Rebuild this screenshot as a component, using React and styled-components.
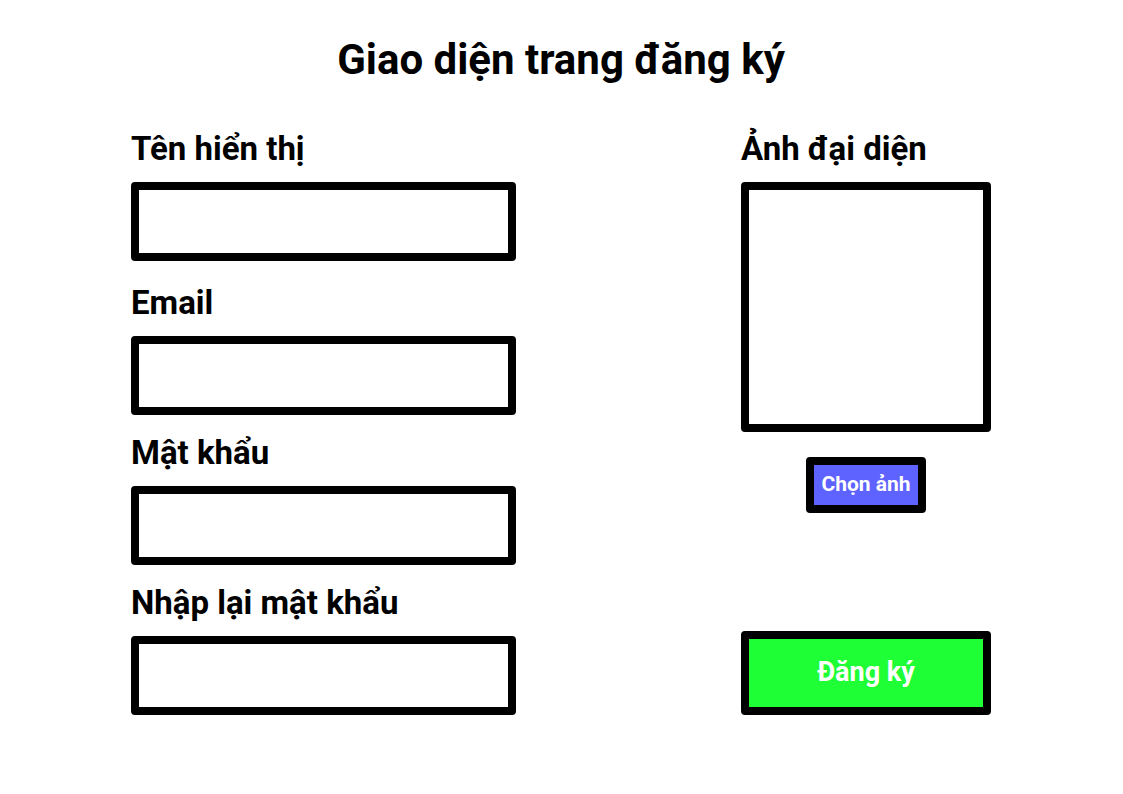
import React from "react";
import styled, { createGlobalStyle } from "styled-components";

const GlobalStyle = createGlobalStyle`
  *, *::before, *::after { box-sizing: border-box; }
  body {
    margin: 0;
    background: #fff;
    color: #000;
    font-family: Roboto, "Liberation Sans", sans-serif;
  }
`;

const Page = styled.main`
  padding: 35px 132px 40px 131px;

  @media (max-width: 960px) {
    padding: 35px 32px 40px;
  }
`;

const Title = styled.h1`
  margin: 0 0 43px;
  font-size: 42px;
  line-height: 50px;
  font-weight: 700;
  text-align: center;
`;

const Form = styled.form`
  display: grid;
  grid-template-columns: minmax(0, 385px) 250px;
  justify-content: space-between;
  column-gap: 32px;
`;

const Stack = styled.div`
  display: flex;
  flex-direction: column;
  gap: ${(p) => p.$gap}px;
`;

const Label = styled.label`
  font-size: 33px;
  line-height: 42px;
  font-weight: 700;
  white-space: nowrap;
`;

const Input = styled.input`
  width: 100%;
  height: 79px;
  padding: 0 16px;
  border: 8px solid #000;
  border-radius: 4px;
  background: #fff;
  font: inherit;
  font-size: 26px;
`;

const AvatarColumn = styled.div`
  display: flex;
  flex-direction: column;
  align-items: center;
`;

const AvatarGroup = styled(Stack)`
  width: 100%;
`;

const AvatarPreview = styled.div`
  aspect-ratio: 1;
  border: 8px solid #000;
  border-radius: 4px;
`;

const Button = styled.button`
  border: 8px solid #000;
  border-radius: 4px;
  padding: 0 0 2px;
  color: #fff;
  font-family: inherit;
  font-weight: 700;
  white-space: nowrap;
  cursor: pointer;
`;

const ChooseButton = styled(Button)`
  width: 120px;
  height: 56px;
  margin-top: 25px;
  background: #5e62ff;
  font-size: 21px;
`;

const SubmitButton = styled(Button)`
  width: 100%;
  height: 84px;
  margin-top: auto;
  background: #1fff35;
  font-size: 27px;
`;

function Field({ id, label, type, autoComplete }) {
  return (
    <Stack $gap={12}>
      <Label htmlFor={id}>{label}</Label>
      <Input id={id} name={id} type={type} autoComplete={autoComplete} />
    </Stack>
  );
}

export default function App() {
  return (
    <>
      <GlobalStyle />
      <Page>
        <Title>Giao diện trang đăng ký</Title>
        <Form onSubmit={(e) => e.preventDefault()}>
          <Stack $gap={21}>
            <Field id="displayName" label="Tên hiển thị" type="text" autoComplete="nickname" />
            <Stack $gap={17}>
              <Field id="email" label="Email" type="email" autoComplete="email" />
              <Field id="password" label="Mật khẩu" type="password" autoComplete="new-password" />
              <Field id="confirmPassword" label="Nhập lại mật khẩu" type="password" autoComplete="new-password" />
            </Stack>
          </Stack>
          <AvatarColumn>
            <AvatarGroup $gap={12}>
              <Label htmlFor="chooseAvatar">Ảnh đại diện</Label>
              <AvatarPreview />
            </AvatarGroup>
            <ChooseButton id="chooseAvatar" type="button">Chọn ảnh</ChooseButton>
            <SubmitButton type="submit">Đăng ký</SubmitButton>
          </AvatarColumn>
        </Form>
      </Page>
    </>
  );
}
